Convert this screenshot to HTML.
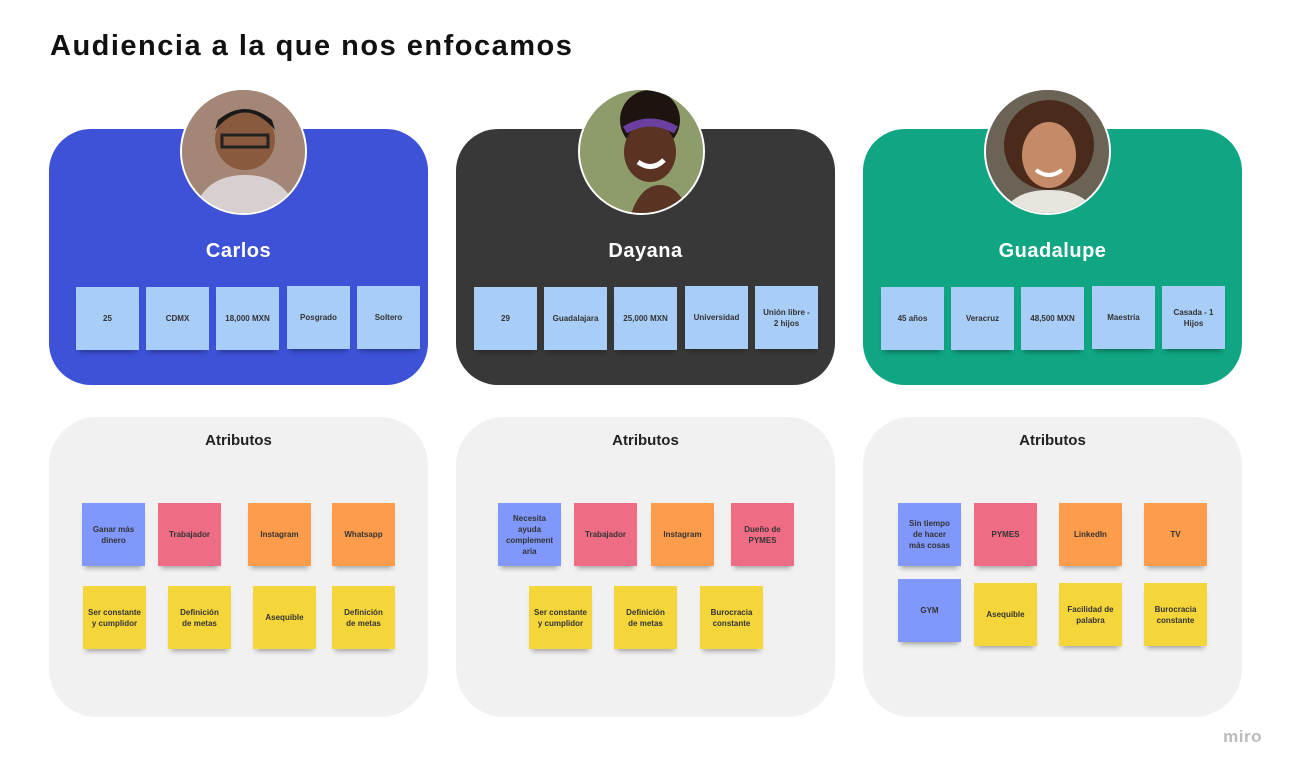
<!DOCTYPE html>
<html><head><meta charset="utf-8"><style>
*{margin:0;padding:0;box-sizing:border-box}
body{width:1291px;height:774px;background:#fff;position:relative;overflow:hidden;font-family:"Liberation Sans",sans-serif}
h1{position:absolute;left:50px;top:30px;font-size:29px;font-weight:bold;color:#111;letter-spacing:1.5px}
.card{position:absolute;width:379px;height:256px;top:129px;border-radius:42px}
.attr{position:absolute;width:379px;height:300px;top:417px;border-radius:48px;background:#f1f1f1}
.attr .t{position:absolute;top:15px;width:100%;text-align:center;font-size:15px;font-weight:bold;color:#222}
.name{position:absolute;top:111px;width:100%;text-align:center;color:#fff;font-size:20px;font-weight:bold;letter-spacing:0.5px}
.av{position:absolute;top:88px;width:127px;height:127px;border-radius:50%;overflow:hidden;border:2px solid #fff}
.s{position:absolute;width:63px;height:63px;display:flex;align-items:center;justify-content:center;text-align:center;font-size:8px;font-weight:bold;color:#333;line-height:11px;box-shadow:0 5px 5px -3px rgba(0,0,0,.35);padding:3px 8px}
.lb{background:#a8cdf6}.b{background:#8097fb}.p{background:#ef6c85}.o{background:#fd9d4b}.y{background:#f5d63a}
.miro{position:absolute;right:29px;top:727px;color:#bbb;font-size:17px;font-weight:bold;letter-spacing:.5px}
</style></head><body>
<h1>Audiencia a la que nos enfocamos</h1>

<div class="card" style="left:49px;background:#3e52d8"><div class="name">Carlos</div></div>
<div class="card" style="left:456px;background:#383838"><div class="name">Dayana</div></div>
<div class="card" style="left:863px;background:#10a683"><div class="name">Guadalupe</div></div>

<div class="av" style="left:180px;background:#b89a86"><svg width="127" height="127"><rect width="127" height="127" fill="#a38675"/><circle cx="63" cy="50" r="30" fill="#8a5a3e"/><path d="M33 40 Q63 5 93 40 L90 30 Q63 8 36 30Z" fill="#1a1a1a"/><rect x="40" y="45" width="46" height="12" fill="none" stroke="#222" stroke-width="3"/><path d="M10 127 Q20 85 63 85 Q106 85 117 127Z" fill="#d8d0d0"/></svg></div>
<div class="av" style="left:578px;background:#9b9a6d"><svg width="127" height="127"><rect width="127" height="127" fill="#8e9c6c"/><circle cx="70" cy="30" r="30" fill="#1d1410"/><ellipse cx="70" cy="62" rx="26" ry="30" fill="#5a3322"/><path d="M45 40 Q70 25 96 40" stroke="#6a3fa0" stroke-width="8" fill="none"/><path d="M50 127 Q60 95 80 95 Q100 95 110 127Z" fill="#5a3322"/><path d="M58 72 Q72 82 84 70" stroke="#fff" stroke-width="5" fill="none"/></svg></div>
<div class="av" style="left:984px;background:#8a8070"><svg width="127" height="127"><rect width="127" height="127" fill="#6b6456"/><circle cx="63" cy="55" r="45" fill="#4a2a1a"/><ellipse cx="63" cy="65" rx="27" ry="33" fill="#c58a68"/><path d="M50 80 Q63 90 76 80" stroke="#fff" stroke-width="4" fill="none"/><path d="M15 127 Q25 100 63 100 Q101 100 112 127Z" fill="#e8e4de"/></svg></div>

<div class="s lb" style="left:76px;top:287px">25</div>
<div class="s lb" style="left:146px;top:287px">CDMX</div>
<div class="s lb" style="left:216px;top:287px;padding:3px">18,000 MXN</div>
<div class="s lb" style="left:287px;top:286px">Posgrado</div>
<div class="s lb" style="left:357px;top:286px">Soltero</div>

<div class="s lb" style="left:474px;top:287px">29</div>
<div class="s lb" style="left:544px;top:287px;padding:3px">Guadalajara</div>
<div class="s lb" style="left:614px;top:287px;padding:3px">25,000 MXN</div>
<div class="s lb" style="left:685px;top:286px;padding:3px">Universidad</div>
<div class="s lb" style="left:755px;top:286px">Unión libre - 2 hijos</div>

<div class="s lb" style="left:881px;top:287px">45 años</div>
<div class="s lb" style="left:951px;top:287px">Veracruz</div>
<div class="s lb" style="left:1021px;top:287px;padding:3px">48,500 MXN</div>
<div class="s lb" style="left:1092px;top:286px">Maestría</div>
<div class="s lb" style="left:1162px;top:286px">Casada - 1 Hijos</div>

<div class="attr" style="left:49px"><div class="t">Atributos</div></div>
<div class="attr" style="left:456px"><div class="t">Atributos</div></div>
<div class="attr" style="left:863px"><div class="t">Atributos</div></div>

<div class="s b" style="left:82px;top:503px">Ganar más dinero</div>
<div class="s p" style="left:158px;top:503px;padding:3px">Trabajador</div>
<div class="s o" style="left:248px;top:503px">Instagram</div>
<div class="s o" style="left:332px;top:503px">Whatsapp</div>
<div class="s y" style="left:83px;top:586px;padding:3px">Ser constante y cumplidor</div>
<div class="s y" style="left:168px;top:586px">Definición de metas</div>
<div class="s y" style="left:253px;top:586px">Asequible</div>
<div class="s y" style="left:332px;top:586px">Definición de metas</div>

<div class="s b" style="left:498px;top:503px;padding:3px">Necesita ayuda complement aria</div>
<div class="s p" style="left:574px;top:503px;padding:3px">Trabajador</div>
<div class="s o" style="left:651px;top:503px">Instagram</div>
<div class="s p" style="left:731px;top:503px">Dueño de PYMES</div>
<div class="s y" style="left:529px;top:586px;padding:3px">Ser constante y cumplidor</div>
<div class="s y" style="left:614px;top:586px">Definición de metas</div>
<div class="s y" style="left:700px;top:586px;padding:3px">Burocracia constante</div>

<div class="s b" style="left:898px;top:503px">Sin tiempo de hacer más cosas</div>
<div class="s p" style="left:974px;top:503px">PYMES</div>
<div class="s o" style="left:1059px;top:503px">LinkedIn</div>
<div class="s o" style="left:1144px;top:503px">TV</div>
<div class="s b" style="left:898px;top:579px">GYM</div>
<div class="s y" style="left:974px;top:583px">Asequible</div>
<div class="s y" style="left:1059px;top:583px">Facilidad de palabra</div>
<div class="s y" style="left:1144px;top:583px;padding:3px">Burocracia constante</div>

<div class="miro">miro</div>
</body></html>
